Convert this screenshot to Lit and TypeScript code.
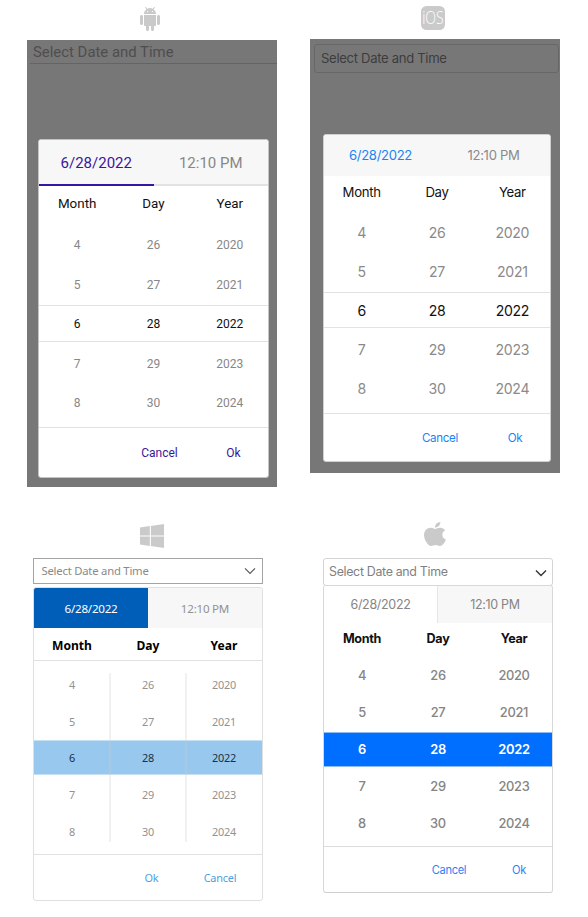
import { LitElement, html, svg, css, nothing } from "lit";
import { customElement, property } from "lit/decorators.js";
import { classMap } from "lit/directives/class-map.js";

type Platform = "android" | "ios" | "windows" | "mac";

const ROWS = [
  ["4", "26", "2020"],
  ["5", "27", "2021"],
  ["6", "28", "2022"],
  ["7", "29", "2023"],
  ["8", "30", "2024"],
];

const ANDROID = svg`<path d="M6 18c0 .55.45 1 1 1h1v3.5c0 .83.67 1.5 1.5 1.5s1.5-.67 1.5-1.5V19h2v3.5c0 .83.67 1.5 1.5 1.5s1.5-.67 1.5-1.5V19h1c.55 0 1-.45 1-1V8H6v10zM3.5 8C2.67 8 2 8.67 2 9.5v7c0 .83.67 1.5 1.5 1.5S5 17.33 5 16.5v-7C5 8.67 4.33 8 3.5 8zm17 0c-.83 0-1.5.67-1.5 1.5v7c0 .83.67 1.5 1.5 1.5s1.5-.67 1.5-1.5v-7c0-.83-.67-1.5-1.5-1.5zm-4.97-5.84l1.3-1.3c.2-.2.2-.51 0-.71-.2-.2-.51-.2-.71 0l-1.48 1.48C13.85 1.23 12.95 1 12 1c-.96 0-1.86.23-2.66.63L7.85.15c-.2-.2-.51-.2-.71 0-.2.2-.2.51 0 .71l1.31 1.31C6.97 3.26 6 5.01 6 7h12c0-1.99-.97-3.75-2.47-4.84zM10 5H9V4h1v1zm5 0h-1V4h1v1z"/>`;
const APPLE = svg`<path d="M12.152 6.896c-.948 0-2.415-1.078-3.96-1.04-2.04.027-3.91 1.183-4.961 3.014-2.117 3.675-.546 9.103 1.519 12.09 1.013 1.454 2.208 3.09 3.792 3.039 1.52-.065 2.09-.987 3.935-.987 1.831 0 2.35.987 3.96.948 1.637-.026 2.676-1.48 3.676-2.948 1.156-1.688 1.636-3.325 1.662-3.415-.039-.013-3.182-1.221-3.22-4.857-.026-3.04 2.48-4.494 2.597-4.559-1.429-2.09-3.623-2.324-4.39-2.376-2-.156-3.675 1.09-4.61 1.09zM15.53 3.83c.843-1.012 1.4-2.427 1.245-3.83-1.207.052-2.662.805-3.532 1.818-.78.896-1.454 2.338-1.273 3.714 1.338.104 2.715-.688 3.559-1.701"/>`;

@customElement("platform-icon")
export class PlatformIcon extends LitElement {
  @property() platform: Platform = "android";

  static styles = css`
    :host { display: block; }
    svg { display: block; fill: #cacaca; overflow: visible; }
    .word {
      font: 300 17.5px "Open Sans", "Noto Sans", sans-serif;
      fill: #fff;
    }
  `;

  render() {
    switch (this.platform) {
      case "android":
        return html`<svg width="24" height="24" viewBox="0 0 24 24">${ANDROID}</svg>`;
      case "ios":
        return html`<svg width="24" height="24" viewBox="0 0 24 24">
          <rect width="24" height="24" rx="5.5" />
          <text class="word" x="1.2" y="18" textLength="21.6" lengthAdjust="spacingAndGlyphs">iOS</text>
        </svg>`;
      case "windows":
        return html`<svg width="24" height="24" viewBox="0 0 24 24">
          <path d="M0 3.4 9.8 2v9.4H0zM10.9 1.9 24 0v11.4H10.9zM0 12.6h9.8V22L0 20.6zM10.9 12.6H24V24l-13.1-1.9z" />
        </svg>`;
      default:
        return html`<svg width="22" height="24" viewBox="2.2 0 19.6 24" preserveAspectRatio="none">${APPLE}</svg>`;
    }
  }
}

@customElement("date-time-picker")
export class DateTimePicker extends LitElement {
  @property() platform: Platform = "android";

  static styles = css`
    :host { display: block; }
    * { box-sizing: border-box; }

    .picker { display: flex; flex-direction: column; white-space: nowrap; font-family: var(--font); }

    .android {
      --font: Roboto, sans-serif;
      --field-size: 14.9px; --tab-size: 15px; --head-size: 13.4px; --row-size: 12px; --button-size: 12px;
      --accent: #3a169c; --muted: #878787; --border: #c4c4c4; --line: #e1e1e1;
      --tabs: 46px; --head: 34px; --body: 207px; --pitch: 39.5px; --band: 37px; --foot: 50px;
      --action: 64px; --action-gap: 10px; --foot-end: 2.5px; --shift: 1px;
      width: 250px; height: 447px; background: #777;
    }
    .ios {
      --font: Inter, sans-serif;
      --field-size: 13.1px; --tab-size: 13.1px; --head-size: 13.2px; --row-size: 14.1px; --button-size: 11.6px;
      --accent: #1a84f4; --muted: #8a8a8a; --border: #d0d0d0; --line: #e2e2e2;
      --tabs: 41px; --head: 32px; --body: 205px; --pitch: 39px; --band: 36px; --foot: 48px;
      --action: 64px; --action-gap: 11px; --foot-end: 3px; --shift: -1px;
      width: 250px; height: 434px; background: #777; letter-spacing: -.02em;
    }
    .windows {
      --font: "Noto Sans", "Open Sans", sans-serif;
      --field-size: 11.3px; --tab-size: 11.6px; --head-size: 12.1px; --row-size: 10.9px; --button-size: 10.9px;
      --accent: #4d9fdf; --muted: #929292; --border: #dfdfdf; --line: #e1e1e1;
      --tabs: 40px; --head: 33px; --body: 193px; --pitch: 36.8px; --band: 35px; --foot: 46px;
      --action: 60px; --action-gap: 8.5px; --foot-end: 12px; --shift: 1px;
      width: 230px; margin-left: 6px;
    }
    .windows .field, .windows .tab, .windows .row, .windows .foot { letter-spacing: -.02em; }
    .mac {
      --font: Inter, sans-serif;
      --field-size: 12.4px; --tab-size: 12.5px; --head-size: 12.6px; --row-size: 12.9px; --button-size: 11.1px;
      --accent: #2f7ff7; --muted: #858585; --border: #d8d8d8; --line: #dcdcdc;
      --tabs: 37px; --head: 30px; --body: 193px; --pitch: 36.8px; --band: 35px; --foot: 46px;
      --action: 60px; --action-gap: 10px; --foot-end: 3px; --shift: 0px;
      width: 230px; margin-left: 13px; letter-spacing: -.02em;
    }

    .field {
      display: flex; align-items: center; justify-content: space-between;
      font-size: var(--field-size); line-height: 1;
    }
    .android .field { height: 24px; margin-left: 3px; padding: 2px 0 0 3px; color: #4e4e4e; border-bottom: 1px solid #646464; }
    .ios .field { height: 29px; margin: 5px 1px 0 4px; padding: 1px 0 0 6px; color: #3d3d3d; border: 1px solid #676767; border-radius: 3px; }
    .windows .field { height: 26px; padding: 0 6.5px 0 7.5px; color: #8a8a8a; border: 1px solid #a4a4a4; }
    .mac .field { height: 28px; padding: 1px 5px 0 5px; color: #7f7f7f; border: 1px solid #d4d4d4; border-radius: 3px; }
    .chevron { fill: none; stroke: #555; stroke-width: 1.1; }
    .mac .chevron { stroke: #333; stroke-width: 1.4; }

    .popup {
      display: flex; flex-direction: column; overflow: hidden;
      background: #fff; border: 1px solid var(--border); border-radius: 3px;
    }
    .android .popup { width: 231px; margin: 75px 0 0 11px; }
    .ios .popup { width: 228px; margin: 61px 0 0 13px; }
    .windows .popup { margin-top: 3px; }
    .mac .popup { margin-top: -1px; border-bottom-color: #cfcfcf; }

    .tabs { display: grid; grid-template-columns: 1fr 1fr; height: var(--tabs); background: #f7f7f7; }
    .tab { display: flex; align-items: center; justify-content: center; font-size: var(--tab-size); color: var(--muted); }
    .android .tab { border-bottom: 2px solid #e2e2e2; padding-top: 2px; }
    .android .active { color: var(--accent); border-bottom-color: #3716a6; }
    .ios .tab { padding-bottom: 2px; }
    .ios .active { color: var(--accent); }
    .windows .active { color: #fff; background: #005eb8; }
    .mac .active { background: #fff; border-right: 1px solid #e6e6e6; }

    .columns { display: grid; grid-template-columns: repeat(3, 1fr); align-items: center; text-align: center; }
    .head { height: var(--head); font-size: var(--head-size); color: #111; }
    .windows .head { border-bottom: 1px solid var(--line); font-weight: 700; color: #000; padding-top: 2px; }
    .mac .head { font-weight: 700; }

    .body { position: relative; display: flex; flex-direction: column; justify-content: center; height: var(--body); }
    .band {
      position: absolute; inset: 0; margin: auto 0; height: var(--band);
      border: solid var(--line); border-width: 1px 0;
    }
    .ios .band { inset: -1px 0 0; }
    .windows .band { background: #99c8ee; border-color: #c5dff3; }
    .mac .band { background: #006fff; border-color: #8dbcf8; }
    .row { position: relative; top: calc(var(--shift) / 2); height: var(--pitch); font-size: var(--row-size); color: var(--muted); }
    .selected { color: #111; }
    .windows .selected { color: #20303d; }
    .mac .row { font-weight: 500; }
    .mac .selected { color: #fff; font-weight: 600; }
    .dividers {
      position: absolute; inset: 12px 0; display: grid; grid-template-columns: repeat(3, 1fr);
    }
    .divider { border-right: 2px solid rgba(205, 205, 205, .28); margin-right: -1px; }
    .divider:last-child { border: 0; }

    .foot {
      display: flex; align-items: center; justify-content: flex-end; gap: var(--action-gap);
      height: var(--foot); padding-right: var(--foot-end);
      border-top: 1px solid var(--line); font-size: var(--button-size); color: var(--accent);
    }
    .android .foot { padding-top: 1px; }
    .action { width: var(--action); text-align: center; }
  `;

  private get desktop() {
    return this.platform === "windows" || this.platform === "mac";
  }

  render() {
    const actions = this.platform === "windows" ? ["Ok", "Cancel"] : ["Cancel", "Ok"];
    return html`
      <div class=${classMap({ picker: true, [this.platform]: true })}>
        <div class="field">
          <span>Select Date and Time</span>
          ${this.desktop
            ? html`<svg class="chevron" width="12" height="8" viewBox="0 0 12 8"><path d="M1 1.4l5 5 5-5" /></svg>`
            : nothing}
        </div>
        <div class="popup">
          <div class="tabs">
            <div class="tab active">6/28/2022</div>
            <div class="tab">12:10 PM</div>
          </div>
          <div class="columns head"><span>Month</span><span>Day</span><span>Year</span></div>
          <div class="body">
            <div class="band"></div>
            ${this.platform === "windows"
              ? html`<div class="dividers"><i class="divider"></i><i class="divider"></i><i class="divider"></i></div>`
              : nothing}
            ${ROWS.map(
              (row, i) => html`<div class=${classMap({ columns: true, row: true, selected: i === 2 })}>
                ${row.map((value) => html`<span>${value}</span>`)}
              </div>`
            )}
          </div>
          <div class="foot">${actions.map((label) => html`<span class="action">${label}</span>`)}</div>
        </div>
      </div>
    `;
  }
}

@customElement("app-root")
export class AppRoot extends LitElement {
  static styles = css`
    :host { display: block; height: 917px; background: #fff; overflow: hidden; }
    .gallery {
      display: grid; grid-template-columns: 250px 250px; grid-template-rows: 515px 402px;
      column-gap: 33px; padding-left: 27px;
    }
    .mark { box-sizing: border-box; }
    .android { height: 40px; padding: 7px 0 0 111px; }
    .ios { height: 39px; padding: 6px 0 0 111px; }
    .windows { height: 43px; padding: 9px 0 0 113px; }
    .mac { height: 43px; padding: 7px 0 0 114px; }
  `;

  render() {
    const platforms: Platform[] = ["android", "ios", "windows", "mac"];
    return html`<main class="gallery">
      ${platforms.map(
        (p) => html`<section>
          <div class=${classMap({ mark: true, [p]: true })}><platform-icon platform=${p}></platform-icon></div>
          <date-time-picker platform=${p}></date-time-picker>
        </section>`
      )}
    </main>`;
  }
}
